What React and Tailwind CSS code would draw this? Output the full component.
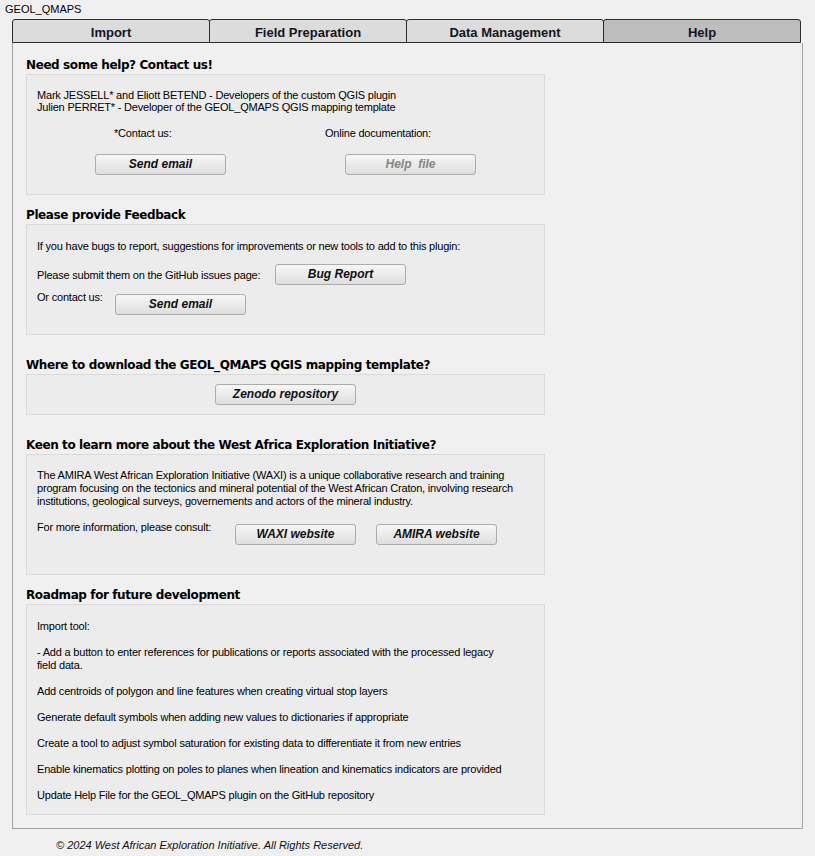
import React from "react";

const tabs = ["Import", "Field Preparation", "Data Management", "Help"];

const roadmap = [
  ["Import tool:"],
  [
    "- Add a button to enter references for publications or reports associated with the processed legacy",
    "field data.",
  ],
  ["Add centroids of polygon and line features when creating virtual stop layers"],
  ["Generate default symbols when adding new values to dictionaries if appropriate"],
  ["Create a tool to adjust symbol saturation for existing data to differentiate it from new entries"],
  ["Enable kinematics plotting on poles to planes when lineation and kinematics indicators are provided"],
  ["Update Help File for the GEOL_QMAPS plugin on the GitHub repository"],
];

const Btn = ({ children, w = "w-[131px]", disabled = false }) => (
  <button
    className={`${w} h-[21px] shrink-0 rounded-[3px] border border-[#acacac] bg-linear-to-b from-[#f7f7f7] to-[#dedede] font-['Liberation_Sans'] text-[12px] font-bold italic leading-[19px] tracking-normal ${
      disabled ? "text-[#858585]" : "text-[#111]"
    }`}
  >
    {children}
  </button>
);

const Heading = ({ children }) => (
  <div className="h-[18px] font-['DejaVu_Sans'] text-[12px] font-bold leading-[18px] tracking-[-0.4px] text-black">
    {children}
  </div>
);

const Box = ({ h, className = "", children }) => (
  <div className={`${h} w-[519px] border border-[#dadada] bg-[#ececec] ${className}`}>
    {children}
  </div>
);

export default function App() {
  return (
    <div className="h-[856px] w-[815px] bg-[#f0f0f0] font-['Liberation_Sans'] text-[11px] text-black">
      <div className="h-[19px] pl-[5px] pt-[3px] leading-[13px]">GEOL_QMAPS</div>

      {/* Tabs */}
      <div className="ml-[12px] flex h-[24px]">
        {tabs.map((t, i) => (
          <div
            key={t}
            className={`flex h-[24px] w-[198px] items-center justify-center rounded-t-[3px] border border-[#2b2b2b] text-[13px] font-bold text-[#141420] ${
              i > 0 ? "-ml-px" : ""
            } ${t === "Help" ? "bg-[#bdbdbd]" : "bg-[#dcdcdc]"}`}
          >
            <span className="pt-[4px]">{t}</span>
          </div>
        ))}
      </div>

      {/* Panel */}
      <div className="ml-[12px] h-[786px] w-[791px] border border-t-0 border-[#a3a3a3] pl-[13px] pt-[13px] tracking-[-0.2px]">
        <Heading>Need some help? Contact us!</Heading>
        <Box h="h-[121px]" className="pt-[14px]">
          <div className="pl-[10px] leading-[12px]">
            <div>Mark JESSELL* and Eliott BETEND - Developers of the custom QGIS plugin</div>
            <div>Julien PERRET* - Developer of the GEOL_QMAPS QGIS mapping template</div>
          </div>
          <div className="mt-[14px] flex leading-[12px]">
            <div className="w-[298px] pl-[87px]">*Contact us:</div>
            <div>Online documentation:</div>
          </div>
          <div className="mt-[15px] flex">
            <div className="w-[318px] pl-[68px]">
              <Btn>Send email</Btn>
            </div>
            <Btn disabled>Help&nbsp;&nbsp;file</Btn>
          </div>
        </Box>

        <div className="mt-[11px]">
          <Heading>Please provide Feedback</Heading>
        </div>
        <Box h="h-[111px]" className="pl-[10px] pt-[15px]">
          <div className="leading-[12px]">
            If you have bugs to report, suggestions for improvements or new tools to add to this plugin:
          </div>
          <div className="mt-[12px] flex items-center">
            <div className="w-[238px] leading-[12px]">Please submit them on the GitHub issues page:</div>
            <Btn>Bug Report</Btn>
          </div>
          <div className="mt-[6px] flex items-start">
            <div className="w-[78px] leading-[12px]">Or contact us:</div>
            <div className="mt-[3px]">
              <Btn>Send email</Btn>
            </div>
          </div>
        </Box>

        <div className="mt-[21px]">
          <Heading>Where to download the GEOL_QMAPS QGIS mapping template?</Heading>
        </div>
        <Box h="h-[41px]" className="flex justify-center pt-[9px]">
          <Btn w="w-[141px]">Zenodo repository</Btn>
        </Box>

        <div className="mt-[21px]">
          <Heading>Keen to learn more about the West Africa Exploration Initiative?</Heading>
        </div>
        <Box h="h-[121px]" className="pl-[10px] pt-[14px]">
          <div className="whitespace-nowrap leading-[13px]">
            <div>
              The AMIRA West African Exploration Initiative (WAXI) is a unique collaborative research and training
            </div>
            <div>
              program focusing on the tectonics and mineral potential of the West African Craton, involving research
            </div>
            <div>institutions, geological surveys, governements and actors of the mineral industry.</div>
          </div>
          <div className="mt-[13px] flex items-start">
            <div className="w-[198px] leading-[12px]">For more information, please consult:</div>
            <div className="mt-[3px] flex gap-[20px]">
              <Btn w="w-[121px]">WAXI website</Btn>
              <Btn w="w-[121px]">AMIRA website</Btn>
            </div>
          </div>
        </Box>

        <div className="mt-[11px]">
          <Heading>Roadmap for future development</Heading>
        </div>
        <Box h="h-[211px]" className="flex flex-col gap-[13px] pl-[10px] pt-[15px]">
          {roadmap.map((lines, i) => (
            <div key={i} className="whitespace-nowrap leading-[13px]">
              {lines.map((l) => (
                <div key={l}>{l}</div>
              ))}
            </div>
          ))}
        </Box>
      </div>

      <div className="mt-[9px] pl-[56px] text-[11px] italic leading-[14px] text-[#111]">
        © 2024 West African Exploration Initiative. All Rights Reserved.
      </div>
    </div>
  );
}
